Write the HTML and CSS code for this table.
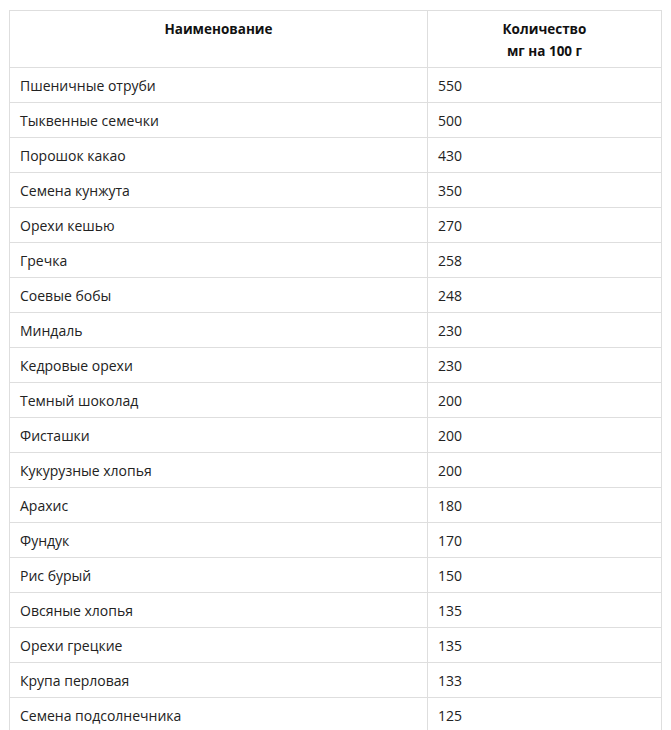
FILE: index.html
```html
<!DOCTYPE html>
<html lang="ru">
<head>
<meta charset="utf-8">
<title>Содержание магния</title>
<link rel="stylesheet" href="styles.css">
</head>
<body>
<div class="wrap">
<table class="tbl">
  <colgroup><col class="c1"><col class="c2"></colgroup>
  <thead>
    <tr><th>Наименование</th><th>Количество<br>мг на 100 г</th></tr>
  </thead>
  <tbody>
    <tr><td>Пшеничные отруби</td><td>550</td></tr>
    <tr><td>Тыквенные семечки</td><td>500</td></tr>
    <tr><td>Порошок какао</td><td>430</td></tr>
    <tr><td>Семена кунжута</td><td>350</td></tr>
    <tr><td>Орехи кешью</td><td>270</td></tr>
    <tr><td>Гречка</td><td>258</td></tr>
    <tr><td>Соевые бобы</td><td>248</td></tr>
    <tr><td>Миндаль</td><td>230</td></tr>
    <tr><td>Кедровые орехи</td><td>230</td></tr>
    <tr><td>Темный шоколад</td><td>200</td></tr>
    <tr><td>Фисташки</td><td>200</td></tr>
    <tr><td>Кукурузные хлопья</td><td>200</td></tr>
    <tr><td>Арахис</td><td>180</td></tr>
    <tr><td>Фундук</td><td>170</td></tr>
    <tr><td>Рис бурый</td><td>150</td></tr>
    <tr><td>Овсяные хлопья</td><td>135</td></tr>
    <tr><td>Орехи грецкие</td><td>135</td></tr>
    <tr><td>Крупа перловая</td><td>133</td></tr>
    <tr><td>Семена подсолнечника</td><td>125</td></tr>
  </tbody>
</table>
</div>
</body>
</html>
```
FILE: styles.css
```css
html, body {
  margin: 0;
  padding: 0;
  background: #fff;
}
.wrap {
  padding: 10px 0 0 9px;
}
.tbl {
  border-collapse: collapse;
  table-layout: fixed;
  width: 653px;
  font-family: "Open Sans", "Noto Sans", sans-serif;
  font-size: 14px;
  color: #222;
}
.c1 { width: 418px; }
.tbl th, .tbl td {
  border: 1px solid #dedede;
  text-align: left;
  padding: 8px 10px 6px;
  line-height: 20px;
}
.tbl th {
  font-weight: 700;
  color: #111;
  text-align: center;
  vertical-align: top;
  padding: 7px 10px 5px;
  line-height: 22px;
  font-size: 13.5px;
}
```
